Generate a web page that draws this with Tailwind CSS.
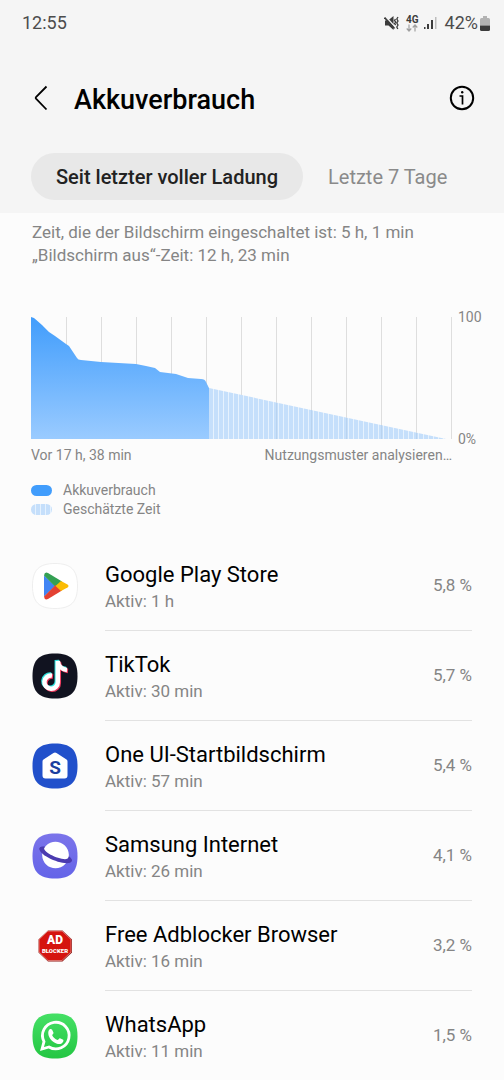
<!DOCTYPE html>
<html lang="de">
<head>
    <meta charset="UTF-8">
    <meta name="viewport" content="width=device-width, initial-scale=1.0">
    <title>Akkuverbrauch</title>
    <script src="https://cdn.jsdelivr.net/npm/@tailwindcss/browser@4"></script>
</head>
<body class="bg-[#fcfcfc] font-[Roboto,sans-serif] text-[#858585]">
    <header class="bg-[#f5f5f5] pb-[13px]">
        <!-- Status bar -->
        <div class="flex h-[46px] items-center justify-between pl-[22px] pr-[14px] text-[#4c4c4c]">
            <span class="text-lg">12:55</span>
            <div class="flex items-center">
                <svg class="mr-1.5 h-4 w-4" viewBox="0 0 16 16" fill="none" stroke="#3c3c3c">
                    <path d="M1 5.500h3L9.500 1v14L4.500 10.500H1z" fill="#3c3c3c" stroke="none"/>
                    <path d="M1.500 1.500l10 11" stroke="#f5f5f5" stroke-width="1.500"/>
                    <path d="M.5 2.500l10 11" stroke-width="1.800"/>
                    <path d="M11.500 4l-1 1.500 1.200 1.500-1.200 1.500 1.200 1.500M14 2l-1.200 2L14 6l-1.200 2L14 10l-1.200 2 1 2" stroke-width="1.300"/>
                </svg>
                <div class="mr-1 flex flex-col items-center">
                    <span class="text-[10px] font-bold leading-[9px] text-[#3c3c3c]">4G</span>
                    <svg class="h-2 w-3" viewBox="0 0 12 8" fill="none" stroke="#a0a0a0" stroke-width="1.200">
                        <path d="M3 .5v6.500M.7 4.500L3 7l2.300-2.500M9 7.500V1M6.700 3.500L9 1l2.300 2.500"/>
                    </svg>
                </div>
                <svg class="mr-2 h-[14px] w-[14px]" viewBox="0 0 14 14" fill="#3c3c3c">
                    <rect x="1" y="11" width="1.500" height="2"/>
                    <rect x="4" y="8" width="2" height="5"/>
                    <rect x="8" y="4" width="2" height="9"/>
                    <rect x="12" y="1" width="1.500" height="12" fill="#bdbdbd"/>
                </svg>
                <span class="text-lg">42%</span>
                <svg class="ml-0.5 h-[15px] w-[10px]" viewBox="0 0 10 15">
                    <path d="M3 0h4v2h1.500Q10 2 10 3.500V9.500H0V3.500Q0 2 1.500 2H3z" fill="#b3b3b3"/>
                    <path d="M0 9.500h10v4Q10 15 8.500 15h-7Q0 15 0 13.500z" fill="#3c3c3c"/>
                </svg>
            </div>
        </div>

        <div class="mt-7 flex h-12 items-center pl-[31px] pr-[29px]">
            <button type="button" aria-label="Zurück" class="mr-[25px]">
                <svg class="h-[26px] w-[18px]" viewBox="0 0 18 26" fill="none" stroke="#000" stroke-width="1.800">
                    <path d="M15.500 1.500L5 12a1.200 1.200 0 0 0 0 1.600L15.500 24.500"/>
                </svg>
            </button>
            <h1 class="flex-1 pt-1 text-[27px] font-medium text-black">Akkuverbrauch</h1>
            <button type="button" aria-label="Info">
                <svg class="h-[26px] w-[26px]" viewBox="0 0 26 26" fill="none" stroke="#000" stroke-width="2">
                    <circle cx="13" cy="13" r="11.200"/>
                    <path d="M10.500 11h3v8.500" stroke-width="1.700"/>
                    <circle cx="13.200" cy="7.300" r="1.200" fill="#000" stroke="none"/>
                </svg>
            </button>
        </div>

        <nav class="mt-[31px] flex items-center pl-[31px]">
            <button type="button" class="h-[47px] rounded-full bg-[#e8e8e8] px-[25px] text-xl font-medium text-[#222]">Seit letzter voller Ladung</button>
            <button type="button" class="h-[47px] px-[25px] text-xl text-[#8a8a8a]">Letzte 7 Tage</button>
        </nav>
    </header>

    <main>
        <p class="px-8 pt-2 text-[17px] leading-[23px]">Zeit, die der Bildschirm eingeschaltet ist: 5 h, 1 min<br>„Bildschirm aus“-Zeit: 12 h, 23 min</p>

        <section class="mt-[50px] pl-[31px] pr-5">
            <div class="flex">
                <svg class="h-[122px] min-w-0 flex-1" viewBox="0 0 421 122" preserveAspectRatio="none">
                    <defs>
                        <linearGradient id="used" x1="0" y1="0" x2="0" y2="1">
                            <stop offset="0" stop-color="#419dfc"/>
                            <stop offset="1" stop-color="#9acbff"/>
                        </linearGradient>
                        <pattern id="stripes" x="2" width="5" height="10" patternUnits="userSpaceOnUse">
                            <rect width="5" height="10" fill="#c5dffb"/>
                            <rect width="1" height="10" fill="#e6f2fe"/>
                        </pattern>
                    </defs>
                    <path d="M35.500 0v122M70.500 0v122M105.500 0v122M140.500 0v122M175.500 0v122M210.500 0v122M245.500 0v122M280.500 0v122M315.500 0v122M350.500 0v122M385.500 0v122M420.500 0v122" stroke="#dedede"/>
                    <path d="M178 71L415 122H178z" fill="url(#stripes)"/>
                    <path d="M245.500 86v36M280.500 93v29M315.500 101v21M350.500 108v14M385.500 116v6" stroke="#b9d3ef"/>
                    <path d="M0 0L3 1 11 8 18 15 24 19 35 27 38 29 42 35 46 41Q47 43 50 43L70 45 105 47 115 49 124 51 129 55 145 57 157 61 170 62Q174 62 175 65L178 71V122H0z" fill="url(#used)"/>
                </svg>
                <div class="-my-2 flex w-8 flex-col justify-between pl-1.5 text-sm leading-4">
                    <span>100</span>
                    <span>0%</span>
                </div>
            </div>
            <div class="mt-1.5 flex justify-between pr-8 text-sm leading-5">
                <span>Vor 17 h, 38 min</span>
                <span>Nutzungsmuster analysieren…</span>
            </div>
            <ul class="mt-4 text-sm leading-[19px]">
                <li class="flex items-center gap-[11px]">
                    <span class="h-[11px] w-[21px] rounded-full bg-[#419dfc]"></span>Akkuverbrauch
                </li>
                <li class="flex items-center gap-[11px]">
                    <span class="h-[11px] w-[21px] rounded-full bg-[repeating-linear-gradient(90deg,#c5dffb_0_4px,#e6f2fe_4px_5px)]"></span>Geschätzte Zeit
                </li>
            </ul>
        </section>

        <!-- Apps by usage -->
        <ul class="mt-[22px] px-8">
            <li class="flex h-[90px] items-center gap-[27px]">
                <svg class="h-[46px] w-[46px] shrink-0" viewBox="0 0 46 46">
                    <path d="M23 .5C39 .5 45.500 7 45.500 23S39 45.500 23 45.500.5 39 .5 23 7 .5 23 .5z" fill="#fff" stroke="#eee"/>
                    <path d="M12 12.500v21L23 23z" fill="#4285f4"/>
                    <path d="M12 12.500Q12.500 8.500 16 10L30 18.500 23.500 24z" fill="#34a053"/>
                    <path d="M12 33.500Q12.500 37.500 16 36L30 27.500 23.500 22z" fill="#e34133"/>
                    <path d="M29 18l6.500 3.500q2 1.500 0 3L29 28l-5.500-5z" fill="#fbbc04"/>
                </svg>
                <div class="flex h-full flex-1 items-center justify-between border-b border-[#e2e2e2]">
                    <div class="pt-0.5">
                        <h2 class="text-[22px] leading-7 text-black">Google Play Store</h2>
                        <p class="text-[17px] leading-6">Aktiv: 1 h</p>
                    </div>
                    <span class="text-[17px]">5,8 %</span>
                </div>
            </li>
            <li class="flex h-[90px] items-center gap-[27px]">
                <svg class="h-[46px] w-[46px] shrink-0" viewBox="0 0 46 46">
                    <path d="M23 .5C39 .5 45.500 7 45.500 23S39 45.500 23 45.500.5 39 .5 23 7 .5 23 .5z" fill="#111320"/>
                    <g fill="none" stroke-width="4.500">
                        <path d="M20 22.500a6.700 6.700 0 1 0 5.800 6.500V8c.5 5 4 8.500 9.200 9" stroke="#2de0dc" transform="translate(-1 -1)"/>
                        <path d="M20 22.500a6.700 6.700 0 1 0 5.800 6.500V8c.5 5 4 8.500 9.200 9" stroke="#f03a5e" transform="translate(1 1)"/>
                        <path d="M20 22.500a6.700 6.700 0 1 0 5.800 6.500V8c.5 5 4 8.500 9.200 9" stroke="#fff"/>
                    </g>
                </svg>
                <div class="flex h-full flex-1 items-center justify-between border-b border-[#e2e2e2]">
                    <div class="pt-0.5">
                        <h2 class="text-[22px] leading-7 text-black">TikTok</h2>
                        <p class="text-[17px] leading-6">Aktiv: 30 min</p>
                    </div>
                    <span class="text-[17px]">5,7 %</span>
                </div>
            </li>
            <li class="flex h-[90px] items-center gap-[27px]">
                <svg class="h-[46px] w-[46px] shrink-0" viewBox="0 0 46 46">
                    <path d="M23 .5C39 .5 45.500 7 45.500 23S39 45.500 23 45.500.5 39 .5 23 7 .5 23 .5z" fill="#2150cb"/>
                    <path d="M21.500 10q1.500-1 3 0L34.500 16.500q1 .7 1 2V32.500q0 3-3 3h-19q-3 0-3-3V18.500q0-1.300 1-2z" fill="#fff"/>
                    <text x="23" y="30.500" text-anchor="middle" font-size="19" font-weight="700" fill="#1c3f9f">S</text>
                </svg>
                <div class="flex h-full flex-1 items-center justify-between border-b border-[#e2e2e2]">
                    <div class="pt-0.5">
                        <h2 class="text-[22px] leading-7 text-black">One UI-Startbildschirm</h2>
                        <p class="text-[17px] leading-6">Aktiv: 57 min</p>
                    </div>
                    <span class="text-[17px]">5,4 %</span>
                </div>
            </li>
            <li class="flex h-[90px] items-center gap-[27px]">
                <svg class="h-[46px] w-[46px] shrink-0" viewBox="0 0 46 46">
                    <defs>
                        <linearGradient id="violet" x1="0" y1="0" x2="0" y2="1">
                            <stop offset="0" stop-color="#7b74ea"/>
                            <stop offset="1" stop-color="#6464e8"/>
                        </linearGradient>
                    </defs>
                    <path d="M23 .5C39 .5 45.500 7 45.500 23S39 45.500 23 45.500.5 39 .5 23 7 .5 23 .5z" fill="url(#violet)"/>
                    <g transform="rotate(22 23.500 22)">
                        <ellipse cx="23.500" cy="21.500" rx="17.300" ry="5" fill="#4b3bb0"/>
                        <circle cx="23.500" cy="22" r="13.300" fill="#fff"/>
                        <path d="M6.200 21.500C6.200 29.500 40.800 29.500 40.800 21.500 40.800 20 38.500 19 36.500 19c2 6.500-28 6.500-26 0-2 0-4.300 1-4.300 2.500z" fill="#4b3bb0"/>
                    </g>
                </svg>
                <div class="flex h-full flex-1 items-center justify-between border-b border-[#e2e2e2]">
                    <div class="pt-0.5">
                        <h2 class="text-[22px] leading-7 text-black">Samsung Internet</h2>
                        <p class="text-[17px] leading-6">Aktiv: 26 min</p>
                    </div>
                    <span class="text-[17px]">4,1 %</span>
                </div>
            </li>
            <li class="flex h-[90px] items-center gap-[27px]">
                <svg class="h-[46px] w-[46px] shrink-0" viewBox="0 0 46 46">
                    <path d="M16 7.500h14.500l9.500 9v13l-9.500 9H16l-9.500-9v-13z" fill="#8f1512"/>
                    <path d="M16 8h14l9 8.500v12.500l-9 8.500H16L7 29V16.500z" fill="#d5140f" stroke="#f3b1ad" stroke-width=".6"/>
                    <text x="23" y="20.500" text-anchor="middle" font-size="12" font-weight="900" fill="#fff">AD</text>
                    <text x="23" y="30" text-anchor="middle" font-size="6" font-weight="900" fill="#fff">BLOCKER</text>
                </svg>
                <div class="flex h-full flex-1 items-center justify-between border-b border-[#e2e2e2]">
                    <div class="pt-0.5">
                        <h2 class="text-[22px] leading-7 text-black">Free Adblocker Browser</h2>
                        <p class="text-[17px] leading-6">Aktiv: 16 min</p>
                    </div>
                    <span class="text-[17px]">3,2 %</span>
                </div>
            </li>
            <li class="flex h-[90px] items-center gap-[27px]">
                <svg class="h-[46px] w-[46px] shrink-0" viewBox="0 0 46 46">
                    <defs>
                        <linearGradient id="green" x1="0" y1="0" x2="0" y2="1">
                            <stop offset="0" stop-color="#45e065"/>
                            <stop offset="1" stop-color="#24c643"/>
                        </linearGradient>
                    </defs>
                    <path d="M23 .5C39 .5 45.500 7 45.500 23S39 45.500 23 45.500.5 39 .5 23 7 .5 23 .5z" fill="url(#green)"/>
                    <path d="M10 36l2-7.300A13.300 13.300 0 1 1 17 34z" fill="none" stroke="#fff" stroke-width="2.800"/>
                    <path d="M16.500 18c.8-2.500 2.500-2.500 3.500-1.500l1.500 3.300c.2.800-1.300 2-1.300 2.400.8 2 3 4 5.300 4.800.7 0 1.700-2 2.500-1.800l3.200 1.600c.8.700-.2 3.200-2 3.900-2.200.8-5 .2-8-2-3.500-2.700-5.700-6.700-4.700-10.700z" fill="#fff"/>
                </svg>
                <div class="flex h-full flex-1 items-center justify-between">
                    <div class="pt-0.5">
                        <h2 class="text-[22px] leading-7 text-black">WhatsApp</h2>
                        <p class="text-[17px] leading-6">Aktiv: 11 min</p>
                    </div>
                    <span class="text-[17px]">1,5 %</span>
                </div>
            </li>
        </ul>
    </main>
</body>
</html>
